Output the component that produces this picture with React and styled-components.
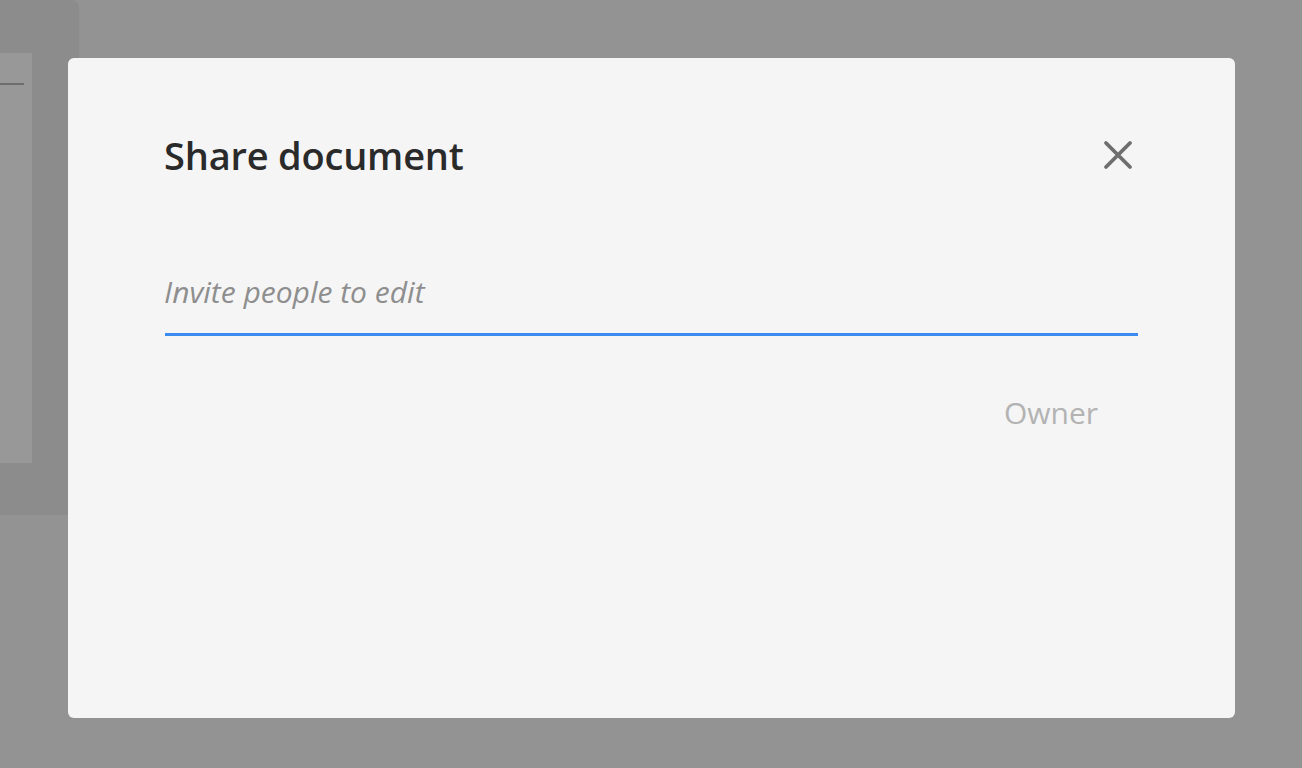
import styled, {createGlobalStyle} from 'styled-components';

const GlobalStyle = createGlobalStyle`
    html, body {
        margin: 0;
        padding: 0;
        background: #939393;
        font-family: 'Open Sans', 'Noto Sans', sans-serif;
    }
`;

const Page = styled.div`
    position: relative;
    width: 1302px;
    height: 768px;
    overflow: hidden;
    background: #939393;
`;

const BackPanel = styled.div`
    width: 79px;
    height: 515px;
    background: #8c8c8c;
    border-top-right-radius: 8px;
    padding-top: 53px;
    box-sizing: border-box;
`;

const BackCard = styled.div`
    width: 32px;
    height: 410px;
    background: #989898;
    padding-top: 30px;
    box-sizing: border-box;
`;

const BackRule = styled.div`
    width: 24px;
    height: 2px;
    background: #6e6e6e;
`;

const Dialog = styled.div`
    position: absolute;
    left: 68px;
    top: 58px;
    width: 1167px;
    height: 660px;
    background: #f5f5f5;
    border-radius: 6px;
    padding: 70px 97px 0 96px;
    box-sizing: border-box;
    display: flex;
    flex-direction: column;
`;

const Header = styled.div`
    display: flex;
    align-items: center;
    justify-content: space-between;
    height: 54px;
`;

const Title = styled.h1`
    margin: 0;
    font-size: 38px;
    font-weight: 600;
    color: #2a2a2a;
    letter-spacing: -0.2px;
`;

const CloseButton = styled.button`
    border: none;
    background: none;
    padding: 0;
    width: 40px;
    height: 40px;
    display: flex;
    align-items: center;
    justify-content: center;
    cursor: pointer;
`;

const Field = styled.div`
    margin-top: 93px;
    margin-left: 1px;
    border-bottom: 3px solid #3b8aef;
    padding-bottom: 24px;
`;

const Input = styled.input`
    border: none;
    outline: none;
    background: transparent;
    width: 100%;
    padding: 0;
    margin-left: -1px;
    font-family: 'Open Sans', sans-serif;
    font-size: 30px;
    line-height: 34px;
    color: #2c2c2c;
    &::placeholder {
        color: #8e8e8e;
        font-style: italic;
    }
`;

const Row = styled.div`
    display: flex;
    justify-content: flex-end;
    padding-right: 40px;
    margin-top: 56px;
`;

const Role = styled.span`
    font-size: 30px;
    color: #b3b3b3;
`;

const App = () => {
    return (
        <Page>
            <GlobalStyle />
            <BackPanel>
                <BackCard>
                    <BackRule />
                </BackCard>
            </BackPanel>
            <Dialog>
                <Header>
                    <Title>Share document</Title>
                    <CloseButton aria-label='Close'>
                        <svg width='32' height='32' viewBox='0 0 32 32'>
                            <path
                                d='M4 4 L28 28 M28 4 L4 28'
                                stroke='#6e6e6e'
                                strokeWidth='3.8'
                                strokeLinecap='round'
                            />
                        </svg>
                    </CloseButton>
                </Header>
                <Field>
                    <Input type='text' placeholder='Invite people to edit' />
                </Field>
                <Row>
                    <Role>Owner</Role>
                </Row>
            </Dialog>
        </Page>
    );
};

export default App;
